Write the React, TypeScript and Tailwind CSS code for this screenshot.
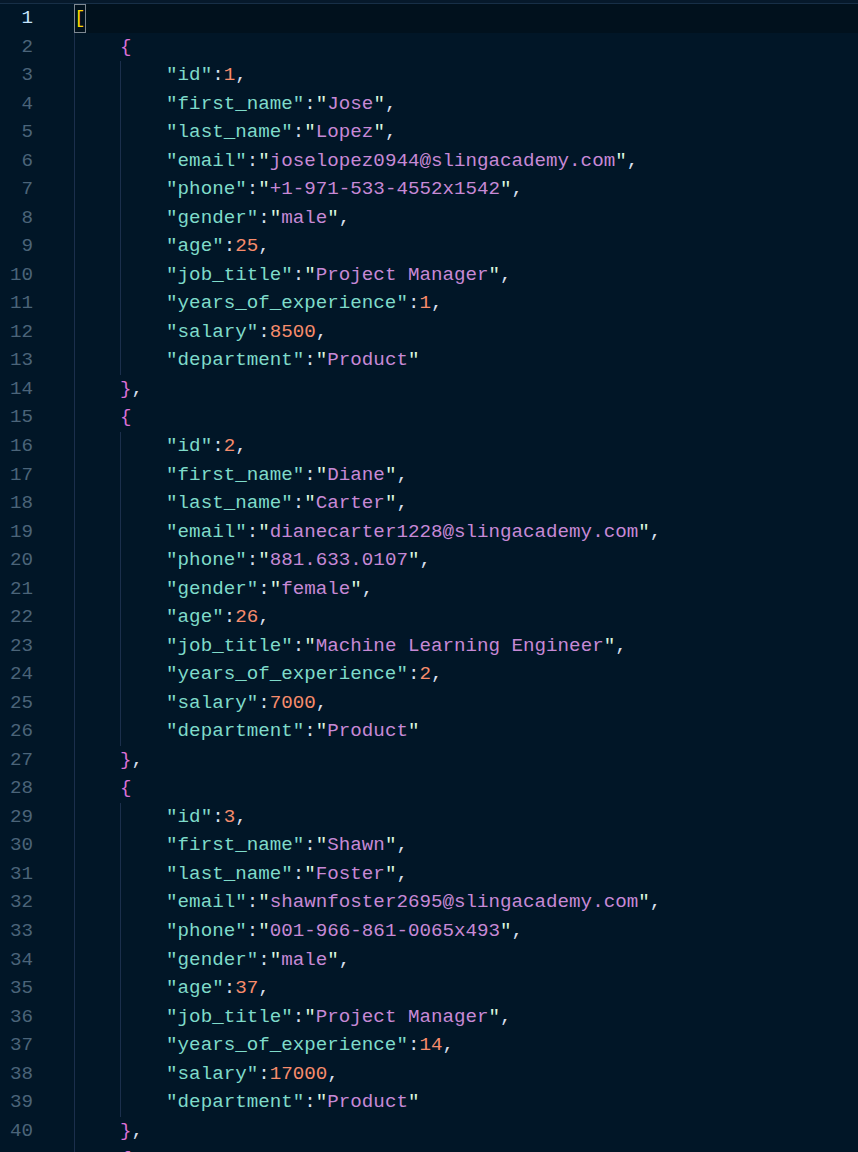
import React from 'react';

type Tok = [string, string];
type Line = { indent: number; toks: Tok[]; box?: boolean };

const KEY = 'text-[#7fdbca]';
const PUNCT = 'text-[#d6deeb]';
const QUOTE = 'text-[#d9f5dd]';
const STR = 'text-[#c789d6]';
const NUM = 'text-[#f78c6c]';
const BRACE = 'text-[#da70d6]';
const BRACKET = 'text-[#ffd700]';

const people: [string, string | number][][] = [
    [
        ['id', 1],
        ['first_name', 'Jose'],
        ['last_name', 'Lopez'],
        ['email', 'joselopez0944@slingacademy.com'],
        ['phone', '+1-971-533-4552x1542'],
        ['gender', 'male'],
        ['age', 25],
        ['job_title', 'Project Manager'],
        ['years_of_experience', 1],
        ['salary', 8500],
        ['department', 'Product'],
    ],
    [
        ['id', 2],
        ['first_name', 'Diane'],
        ['last_name', 'Carter'],
        ['email', 'dianecarter1228@slingacademy.com'],
        ['phone', '881.633.0107'],
        ['gender', 'female'],
        ['age', 26],
        ['job_title', 'Machine Learning Engineer'],
        ['years_of_experience', 2],
        ['salary', 7000],
        ['department', 'Product'],
    ],
    [
        ['id', 3],
        ['first_name', 'Shawn'],
        ['last_name', 'Foster'],
        ['email', 'shawnfoster2695@slingacademy.com'],
        ['phone', '001-966-861-0065x493'],
        ['gender', 'male'],
        ['age', 37],
        ['job_title', 'Project Manager'],
        ['years_of_experience', 14],
        ['salary', 17000],
        ['department', 'Product'],
    ],
];

const buildLines = (): Line[] => {
    const lines: Line[] = [{ indent: 0, toks: [['[', BRACKET]], box: true }];
    people.forEach((fields) => {
        lines.push({ indent: 1, toks: [['{', BRACE]] });
        fields.forEach(([key, value], i) => {
            const toks: Tok[] = [[`"${key}"`, KEY], [':', PUNCT]];
            if (typeof value === 'number') {
                toks.push([String(value), NUM]);
            } else {
                toks.push(['"', QUOTE], [value, STR], ['"', QUOTE]);
            }
            if (i < fields.length - 1) toks.push([',', PUNCT]);
            lines.push({ indent: 2, toks });
        });
        lines.push({ indent: 1, toks: [['}', BRACE], [',', PUNCT]] });
    });
    lines.push({ indent: 1, toks: [['{', BRACE]] });
    return lines;
};

const App: React.FC = () => {
    const lines = buildLines();

    return (
        <div
            className="h-screen w-full overflow-hidden bg-[#011627] text-[19.2px] leading-[28.54px]"
            style={{ fontFamily: '"Liberation Mono", "DejaVu Sans Mono", monospace' }}
        >
            {/* tab strip edge */}
            <div className="h-[4px] bg-[#06192b] border-b border-[#172f47]" />

            {lines.map((line, idx) => {
                const active = idx === 0;
                return (
                    <div key={idx} className="flex h-[28.54px]">
                        <div
                            className={`w-[74px] shrink-0 pr-[41px] text-right ${
                                active ? 'text-[#c5e4fd]' : 'text-[#4b6479]'
                            }`}
                        >
                            {idx + 1}
                        </div>
                        <div className={`flex flex-1 items-stretch ${active ? 'bg-[#01111d]' : ''}`}>
                            {Array.from({ length: line.indent }).map((_, k) => (
                                <span key={k} className="w-[4ch] shrink-0 border-l border-[#1b2f4c]" />
                            ))}
                            {line.box ? (
                                <span className="inline-block w-[1ch] text-[#ffd700] shadow-[inset_0_0_0_1px_#7d8791]">
                                    [
                                </span>
                            ) : (
                                <span className="whitespace-pre">
                                    {line.toks.map(([t, c], j) => (
                                        <span key={j} className={c}>
                                            {t}
                                        </span>
                                    ))}
                                </span>
                            )}
                        </div>
                    </div>
                );
            })}
        </div>
    );
};

export default App;
